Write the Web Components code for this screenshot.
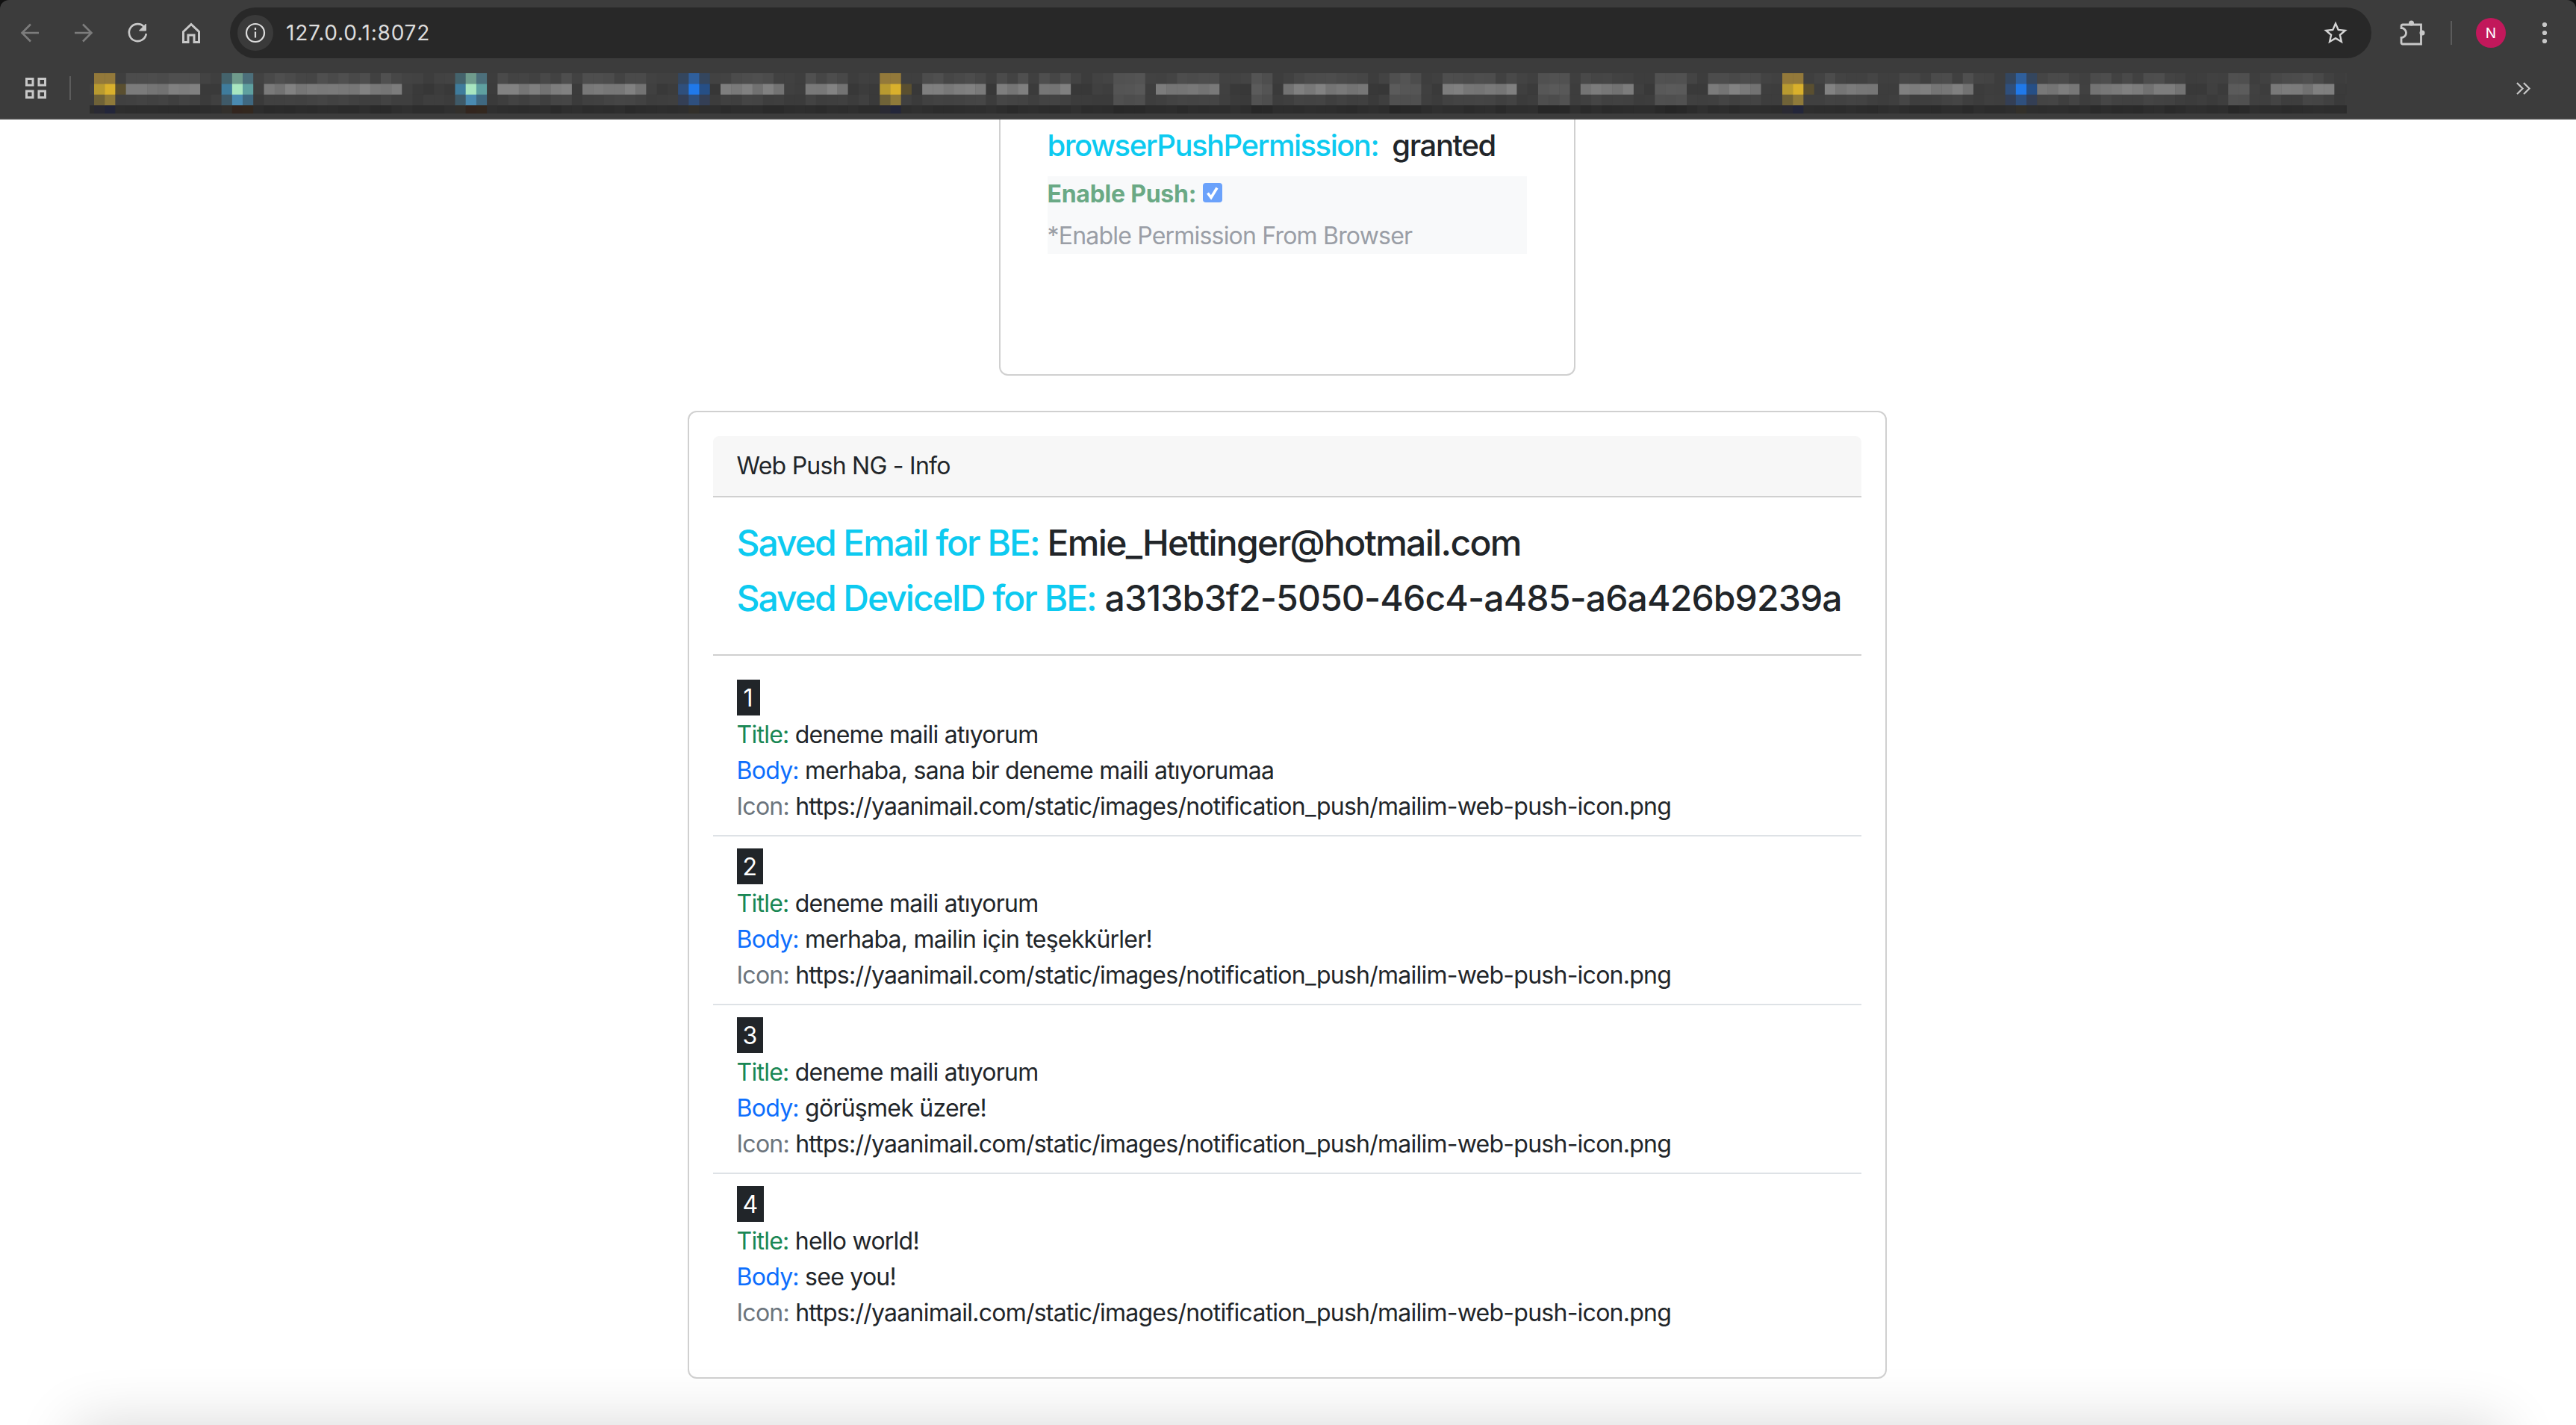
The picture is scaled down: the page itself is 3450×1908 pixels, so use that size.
<!DOCTYPE html>
<html>
<head>
<meta charset="utf-8">
<title>Web Push NG</title>
<style>
  html { background: #111; }
  html, body { margin: 0; height: 100%; overflow: hidden; }
  body { display: flex; flex-direction: column; font-family: Inter, "Noto Sans", sans-serif; color: #212529; }
</style>
</head>
<body>
<browser-bar></browser-bar>
<push-page>
  <push-permission></push-permission>
  <push-info email="Emie_Hettinger@hotmail.com" device="a313b3f2-5050-46c4-a485-a6a426b9239a">
    <push-item num="1" title-text="deneme maili atıyorum" body-text="merhaba, sana bir deneme maili atıyorumaa"></push-item>
    <push-item num="2" title-text="deneme maili atıyorum" body-text="merhaba, mailin için teşekkürler!"></push-item>
    <push-item num="3" title-text="deneme maili atıyorum" body-text="görüşmek üzere!"></push-item>
    <push-item num="4" title-text="hello world!" body-text="see you!"></push-item>
  </push-info>
</push-page>
<script>
class BlurStrip extends HTMLElement {
  constructor(){
    super();
    this.attachShadow({mode: 'open'});
  }
  connectedCallback(){
    // bookmarks are mosaic-blurred in the reference, so they are drawn as cells
    const cell = 14.22, start = 120, end = 3143, grid = 111.78;
    const yellow = [['#93793a','#93793a','#3f3f3f'],['#b89a30','#d9b02c','#5a4f30'],['#6f6238','#8f7a3a','#404040'],['#2a2a33','#23263a','#2e2e2e']];
    const teal = [['#44636c','#6f9b8c','#4c6f7b'],['#3f7c9c','#a8e6c0','#5fa0a0'],['#3f5a68','#4a8ab0','#3f6880'],['#33302c','#33261f','#33281f']];
    const blue = [['#34465e','#2f5f9c','#34465e'],['#2f4f7c','#2079ea','#264f86'],['#343f55','#2f507e','#343f55'],['#2e2e2e','#33302a','#2e2e2e']];
    const favs = [[126,yellow],[297,teal],[603,teal],[913,blue],[1178,yellow],[2384,yellow],[2680,blue]];
    const texts = [[168,267],[350,533],[660,760],[786,870],[968,1052],[1080,1140],[1235,1320],[1332,1375],[1390,1430],[1543,1640],[1725,1838],[1936,2033],[2118,2190],[2285,2355],[2440,2510],[2540,2650],[2730,2790],[2805,2930],[3043,3130]];
    const dims = [[1487,1530],[1670,1710],[1865,1900],[2062,2100],[2215,2255],[2988,3015]];
    const inside = (list, x) => list.find(r => x + cell / 2 > r[0] && x + cell / 2 < r[1]);
    let seed = 7;
    const rnd = () => (seed = (seed * 16807) % 2147483647) / 2147483647;
    const grey = (v, j) => { const g = Math.round(v + (rnd() - .5) * j); return `rgb(${g},${g},${g})`; };
    let rects = '';
    for (let k = 0; grid + k * cell < end; k++) {
      const x = grid + k * cell;
      const fav = favs.find(f => x + cell / 2 > f[0] && x + cell / 2 < f[0] + cell * 3);
      const txt = inside(texts, x), dim = inside(dims, x);
      let cols;
      if (fav) {
        const col = Math.floor((x + cell / 2 - fav[0]) / cell);
        cols = fav[1].map(r => r[col]);
      }
      else if (txt) cols = [grey(72, 16), grey(122, 18), grey(66, 8), grey(44, 5)];
      else if (dim) cols = [grey(80, 8), grey(88, 8), grey(78, 8), grey(40, 4)];
      else cols = [grey(64, 8), grey(60, 10), grey(61, 6), grey(46, 4)];
      cols.forEach((c, i) => {
        const y = i === 3 ? 43 : i * 14.33;
        rects += `<rect x="${(x - start).toFixed(2)}" y="${y}" width="${cell + .4}" height="${i === 3 ? 11 : 14.8}" fill="${c}"/>`;
      });
    }
    this.shadowRoot.innerHTML = `
      <style>:host{display:block;width:${end - start}px;height:54px;overflow:hidden;flex:none}svg{display:block}</style>
      <svg width="${end - start}" height="54">${rects}</svg>`;
  }
}

const barTemplate = document.createElement('template');
barTemplate.innerHTML = `
  <style>
    :host { display: block; flex: none; height: 160px; background: #3c3c3c; color: #c8c8c8; box-sizing: border-box; border-bottom: 2px solid #454545; border-radius: 12px 12px 0 0; }
    .top { display: flex; align-items: center; height: 68px; padding: 10px 0 0 20px; }
    .nav { display: flex; gap: 32px; flex: none; }
    .nav svg, .end svg { display: block; }
    .omni { flex: 1; height: 68px; margin-left: 32px; border-radius: 34px; background: #282828; display: flex; align-items: center; padding: 0 12px 0 10px; box-sizing: border-box; }
    .chip { width: 48px; height: 48px; border-radius: 24px; background: #3a3a3a; display: flex; align-items: center; justify-content: center; flex: none; }
    .url { margin-left: 17px; flex: 1; font: 400 28px Inter, sans-serif; color: #dcdcdc; letter-spacing: .8px; }
    .end { display: flex; align-items: center; flex: none; width: 274px; }
    .avatar { width: 40px; height: 40px; border-radius: 50%; background: #c2185b; color: #fff; font: 400 19px Inter, sans-serif; display: flex; align-items: center; justify-content: center; flex: none; }
    .sep { width: 2px; background: #5c5c5c; flex: none; }
    .marks { display: flex; align-items: flex-start; height: 54px; margin-top: 20px; padding-left: 34px; }
    .grid { margin-top: 6px; flex: none; }
    .sep2 { height: 32px; margin: 4px 0 0 31px; }
    blur-strip { margin-left: 25px; }
    .more { margin: 12px 0 0 227px; flex: none; }
  </style>
  <div class="top">
    <div class="nav">
      <svg width="40" height="40" viewBox="0 0 40 40" fill="none" stroke="#7c7c7c" stroke-width="2.6"><path d="M32 20H10M21 8.500 9.500 20 21 31.500"/></svg>
      <svg width="40" height="40" viewBox="0 0 40 40" fill="none" stroke="#7c7c7c" stroke-width="2.6"><path d="M8 20h22M19 8.500 30.500 20 19 31.500"/></svg>
      <svg width="40" height="40" viewBox="0 0 40 40" fill="none" stroke="#c8c8c8" stroke-width="2.6"><path d="M29 12a11.500 11.500 0 1 0 2.800 9"/><path d="M31.500 8v9h-9z" fill="#c8c8c8" stroke-width="1"/></svg>
      <svg width="40" height="40" viewBox="0 0 40 40" fill="none" stroke="#c8c8c8" stroke-width="3"><path d="M9.500 18.500 20 8.500l10.500 10V32.500H24V23h-8v9.500H9.500z"/></svg>
    </div>
    <div class="omni">
      <div class="chip"><svg width="30" height="30" viewBox="0 0 30 30" fill="none" stroke="#dcdcdc" stroke-width="2.200"><circle cx="15" cy="15" r="12"/><path d="M15 13.500v8"/><path d="M15 8v3"/></svg></div>
      <div class="url">127.0.0.1:8072</div>
      <svg width="32" height="32" viewBox="0 0 32 32" fill="none" stroke="#d4d4d4" stroke-width="2.400" style="margin-right:20px"><path d="m16 3.500 3.700 8.400 9.100.900-6.900 6 2 9-7.900-4.700-7.900 4.700 2-9-6.900-6 9.100-.900z"/></svg>
    </div>
    <div class="end">
      <svg style="margin-left:34px;flex:none" width="40" height="40" viewBox="0 0 40 40" fill="none" stroke="#c8c8c8" stroke-width="2.800"><path d="M8 9h24.500v26H8q-2 0-2-2v-6.500a6.500 6.500 0 0 0 0-13V11q0-2 2-2z"/><circle cx="19.500" cy="7" r="3.500" fill="#c8c8c8" stroke="none"/><circle cx="34" cy="20" r="3.500" fill="#c8c8c8" stroke="none"/></svg>
      <div class="sep" style="height:32px;margin:0 32px"></div>
      <div class="avatar">N</div>
      <svg style="margin-left:48px;flex:none" width="8" height="36" viewBox="0 0 8 36" fill="#c8c8c8"><circle cx="4" cy="7" r="3.100"/><circle cx="4" cy="18" r="3.100"/><circle cx="4" cy="29" r="3.100"/></svg>
    </div>
  </div>
  <div class="marks">
    <svg class="grid" width="28" height="28" viewBox="0 0 28 28" fill="none" stroke="#c8c8c8" stroke-width="3"><rect x="1.500" y="1.500" width="8.500" height="8.500"/><rect x="18" y="1.500" width="8.500" height="8.500"/><rect x="1.500" y="18" width="8.500" height="8.500"/><rect x="18" y="18" width="8.500" height="8.500"/></svg>
    <div class="sep sep2"></div>
    <blur-strip></blur-strip>
    <svg class="more" width="20" height="17" viewBox="0 0 20 17" fill="none" stroke="#c8c8c8" stroke-width="2.200"><path d="m1 1 7.500 7.500L1 16M10 1l7.500 7.500L10 16"/></svg>
  </div>
`;
class BrowserBar extends HTMLElement {
  constructor(){
    super();
    this.attachShadow({mode: 'open'});
    this.shadowRoot.append(barTemplate.content.cloneNode(true));
  }
}

const pageTemplate = document.createElement('template');
pageTemplate.innerHTML = `
  <style>
    :host { display: flex; flex-direction: column; align-items: center; flex: 1; min-height: 0; gap: 47px; position: relative; overflow: hidden; background: #fff; padding-right: 3px; }
    /* the shadow of something just below the window edge */
    :host::after { content: ""; position: absolute; left: 100px; right: 100px; bottom: -200px; height: 200px; box-shadow: 0 0 80px rgba(0,0,0,.16); }
  </style>
  <slot></slot>
`;
class PushPage extends HTMLElement {
  constructor(){
    super();
    this.attachShadow({mode: 'open'});
    this.shadowRoot.append(pageTemplate.content.cloneNode(true));
  }
}

const permTemplate = document.createElement('template');
permTemplate.innerHTML = `
  <style>
    :host { display: block; flex: none; box-sizing: border-box; width: 772px; height: 343px; border: 2px solid #d0d0d0; border-top: 0; border-radius: 0 0 12px 12px; padding: 11px 63px 0; background: #fff; font: 400 32px/48px Inter, sans-serif; }
    h5 { margin: 0 0 17px; font-size: 40px; line-height: 48px; font-weight: 500; color: #212529; white-space: nowrap; letter-spacing: -1.4px; }
    h5 span { color: #0dcaf0; letter-spacing: -1.5px; margin-right: 9px; }
    .box { background: #f8f9fa; width: 642px; padding: 0; height: 104px; }
    .row { display: flex; align-items: center; height: 48px; letter-spacing: -.8px; }
    b { color: #6aa985; font-weight: 700; letter-spacing: -.25px; }
    .check { width: 26px; height: 26px; border-radius: 4px; background: #6ba2fb; margin: -4px 0 0 9px; }
    .check svg { display: block; }
    .hint { margin-top: 8px; color: #9a9ea6; }
  </style>
  <h5><span>browserPushPermission:</span> granted</h5>
  <div class="box">
    <div class="row"><b>Enable Push:</b><div class="check"><svg width="26" height="26" viewBox="0 0 26 26" fill="none" stroke="#fff" stroke-width="3.600"><path d="m6.500 13.500 4.500 6 8-13"/></svg></div></div>
    <div class="row hint">*Enable Permission From Browser</div>
  </div>
`;
class PushPermission extends HTMLElement {
  constructor(){
    super();
    this.attachShadow({mode: 'open'});
    this.shadowRoot.append(permTemplate.content.cloneNode(true));
  }
}

class PushInfo extends HTMLElement {
  constructor(){
    super();
    this.attachShadow({mode: 'open'});
    this.shadowRoot.innerHTML = `
      <style>
        :host { display: block; flex: none; box-sizing: border-box; width: 1606px; height: 1296px; border: 2px solid #d0d0d0; border-radius: 12px; padding: 32px; background: #fff; font: 400 32px/48px Inter, sans-serif; letter-spacing: -.75px; }
        header { height: 80px; padding: 0 32px; background: #f7f7f7; border-bottom: 2px solid #d0d0d0; border-radius: 8px 8px 0 0; line-height: 80px; }
        .main { padding: 32px; border-bottom: 2px solid #d0d0d0; height: 146px; margin-bottom: 16px; }
        h4 { margin: 0 0 16px; font-size: 48px; line-height: 57.6px; font-weight: 500; white-space: nowrap; }
        h4 span { color: #0dcaf0; letter-spacing: -2px; }
        .email { letter-spacing: -1.68px; }
        .device { letter-spacing: -.85px; }
      </style>
      <header>Web Push NG - Info</header>
      <div class="main">
        <h4 class="email"><span>Saved Email for BE:</span> ${this.getAttribute('email')}</h4>
        <h4 class="device"><span>Saved DeviceID for BE:</span> ${this.getAttribute('device')}</h4>
      </div>
      <slot></slot>
    `;
  }
}

class PushItem extends HTMLElement {
  constructor(){
    super();
    this.attachShadow({mode: 'open'});
    this.shadowRoot.innerHTML = `
      <style>
        :host { display: block; padding: 16px 32px; }
        :host(:not(:first-child)) { border-top: 2px solid #dee2e6; }
        .num { display: inline-block; padding: 0 8px; min-width: 15px; text-align: center; letter-spacing: 0; background: #212529; color: #fff; height: 48px; line-height: 50px; vertical-align: top; }
        .line { height: 48px; line-height: 51px; white-space: nowrap; }
        .t { color: #198754; } .b { color: #0d6efd; } .i { color: #6c757d; }
      </style>
      <div class="line"><span class="num">${this.getAttribute('num')}</span></div>
      <div class="line"><span class="t">Title:</span> ${this.getAttribute('title-text')}</div>
      <div class="line"><span class="b">Body:</span> ${this.getAttribute('body-text')}</div>
      <div class="line"><span class="i">Icon:</span> https://yaanimail.com/static/images/notification_push/mailim-web-push-icon.png</div>
    `;
  }
}

customElements.define('blur-strip', BlurStrip);
customElements.define('browser-bar', BrowserBar);
customElements.define('push-page', PushPage);
customElements.define('push-permission', PushPermission);
customElements.define('push-info', PushInfo);
customElements.define('push-item', PushItem);
</script>
</body>
</html>
